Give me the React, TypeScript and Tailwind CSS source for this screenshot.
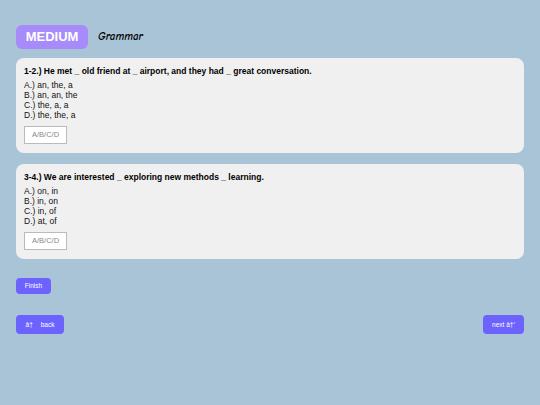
export default function App() {
  const questions = [
    {
      title: '1-2.) He met _ old friend at _ airport, and they had _ great conversation.',
      options: ['A.) an, the, a', 'B.) an, an, the', 'C.) the, a, a', 'D.) the, the, a'],
    },
    {
      title: '3-4.) We are interested _ exploring new methods _ learning.',
      options: ['A.) on, in', 'B.) in, on', 'C.) in, of', 'D.) at, of'],
    },
  ];

  return (
    <div className="min-h-[405px] w-[540px] bg-[#a9c4d7] px-4 pt-[25px] font-['Liberation_Sans',Arial,sans-serif] text-black">
      {/* header */}
      <div className="flex items-center gap-[10px]">
        <div className="flex h-6 w-[72px] items-center justify-center rounded-[6px] bg-[#a78bfa] text-[13px] font-bold text-white">
          MEDIUM
        </div>
        <span className="font-['Comic_Sans_MS','Comic_Neue',cursive] text-[11px] font-bold italic">Grammar</span>
      </div>

      {/* questions */}
      <div className="mt-[9px] flex flex-col gap-[11px]">
        {questions.map((q) => (
          <div key={q.title} className="h-[95px] rounded-[8px] bg-[#f0f0f0] px-2 pt-2">
            <p className="text-[8.5px] leading-[10px] font-bold">{q.title}</p>
            <div className="mt-[4px] text-[8.5px] leading-[10px] text-[#111]">
              {q.options.map((o) => (
                <div key={o}>{o}</div>
              ))}
            </div>
            <input
              placeholder="A/B/C/D"
              className="mt-[3px] h-[18px] w-[43px] border border-[#bbb] bg-white text-center text-[7.5px] outline-none placeholder:text-[#888]"
            />
          </div>
        ))}
      </div>

      <button className="mt-[19px] flex h-4 w-[35px] items-center justify-center rounded-[4px] bg-[#6c63ff] text-[6.5px] text-white">
        Finish
      </button>

      <div className="mt-[21px] flex items-center justify-between">
        <button className="flex h-[19px] w-12 items-center justify-center gap-[8px] rounded-[4px] bg-[#6c63ff] text-[6.5px] text-white">
          <span>â†</span>
          <span>back</span>
        </button>
        <button className="flex h-[19px] w-[41px] items-center justify-center rounded-[4px] bg-[#6c63ff] text-[6.5px] text-white">
          next â†’
        </button>
      </div>
    </div>
  );
}
